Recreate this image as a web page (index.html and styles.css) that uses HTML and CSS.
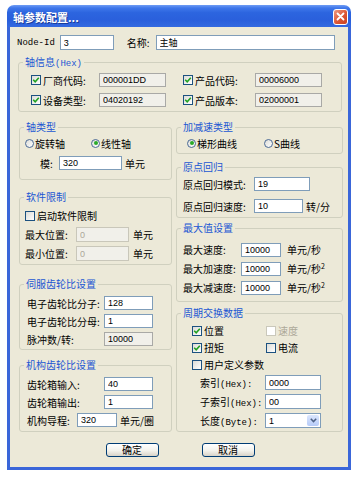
FILE: index.html
```html
<!DOCTYPE html>
<html lang="zh-CN">
<head>
    <meta charset="UTF-8">
    <meta name="viewport" content="width=device-width, initial-scale=1.0">
    <title>轴参数配置</title>
    <link rel="stylesheet" href="styles.css">
</head>
<body>
    <div class="window">
        <div class="titlebar">
            <span class="title">轴参数配置...</span>
            <span class="close">
                <svg width="9" height="9" viewBox="0 0 9 9"><path d="M1.5 1.5 L7.5 7.5 M7.5 1.5 L1.5 7.5" stroke="#fff" stroke-width="1.8" stroke-linecap="round"/></svg>
            </span>
        </div>
        <div class="frame">
            <div class="top-row">
                <span class="mono">Node-Id</span>
                <input class="field node-id" value="3">
                <span class="name-lbl">名称:</span>
                <input class="field name" value="主轴">
            </div>

            <div class="group axis-info">
                <span class="legend">轴信息<span class="mono">(Hex)</span></span>
                <div class="body">
                    <div class="item">
                        <span class="cb"><svg viewBox="0 0 8 8"><path d="M1.2 3.8 L3.2 5.8 L6.8 1.8" fill="none" stroke="#21a121" stroke-width="1.6"/></svg></span>
                        <span class="lbl">厂商代码:</span>
                        <input class="field ro" value="000001DD" readonly>
                    </div>
                    <div class="item">
                        <span class="cb"><svg viewBox="0 0 8 8"><path d="M1.2 3.8 L3.2 5.8 L6.8 1.8" fill="none" stroke="#21a121" stroke-width="1.6"/></svg></span>
                        <span class="lbl">产品代码:</span>
                        <input class="field ro" value="00006000" readonly>
                    </div>
                    <div class="item">
                        <span class="cb"><svg viewBox="0 0 8 8"><path d="M1.2 3.8 L3.2 5.8 L6.8 1.8" fill="none" stroke="#21a121" stroke-width="1.6"/></svg></span>
                        <span class="lbl">设备类型:</span>
                        <input class="field ro" value="04020192" readonly>
                    </div>
                    <div class="item">
                        <span class="cb"><svg viewBox="0 0 8 8"><path d="M1.2 3.8 L3.2 5.8 L6.8 1.8" fill="none" stroke="#21a121" stroke-width="1.6"/></svg></span>
                        <span class="lbl">产品版本:</span>
                        <input class="field ro" value="02000001" readonly>
                    </div>
                </div>
            </div>

            <div class="columns">
                <div class="col">
                    <div class="group axis-type">
                        <span class="legend">轴类型</span>
                        <div class="body">
                            <div class="row">
                                <span class="opt first"><span class="radio"></span>旋转轴</span>
                                <span class="opt"><span class="radio on"></span>线性轴</span>
                            </div>
                            <div class="row">
                                <span class="lbl mod-lbl">模:</span>
                                <input class="field mod" value="320">
                                <span class="unit">单元</span>
                            </div>
                        </div>
                    </div>

                    <div class="group soft-limit">
                        <span class="legend">软件限制</span>
                        <div class="body">
                            <div class="row">
                                <span class="cb"></span>
                                <span class="cb-text">启动软件限制</span>
                            </div>
                            <div class="row">
                                <span class="lbl">最大位置:</span>
                                <input class="field dis" value="0" disabled>
                                <span class="unit">单元</span>
                            </div>
                            <div class="row">
                                <span class="lbl">最小位置:</span>
                                <input class="field dis" value="0" disabled>
                                <span class="unit">单元</span>
                            </div>
                        </div>
                    </div>

                    <div class="group gear">
                        <span class="legend">伺服齿轮比设置</span>
                        <div class="body">
                            <div class="row">
                                <span class="lbl">电子齿轮比分子:</span>
                                <input class="field" value="128">
                            </div>
                            <div class="row">
                                <span class="lbl">电子齿轮比分母:</span>
                                <input class="field" value="1">
                            </div>
                            <div class="row">
                                <span class="lbl">脉冲数/转:</span>
                                <input class="field ro" value="10000" readonly>
                            </div>
                        </div>
                    </div>

                    <div class="group mech">
                        <span class="legend">机构齿轮比设置</span>
                        <div class="body">
                            <div class="row">
                                <span class="lbl">齿轮箱输入:</span>
                                <input class="field" value="40">
                            </div>
                            <div class="row">
                                <span class="lbl">齿轮箱输出:</span>
                                <input class="field" value="1">
                            </div>
                            <div class="row">
                                <span class="lbl lead-lbl">机构导程:</span>
                                <input class="field lead" value="320">
                                <span class="unit">单元/圈</span>
                            </div>
                        </div>
                    </div>
                </div>

                <div class="col">
                    <div class="group accel">
                        <span class="legend">加减速类型</span>
                        <div class="body">
                            <div class="row">
                                <span class="opt first"><span class="radio on"></span>梯形曲线</span>
                                <span class="opt"><span class="radio"></span>S曲线</span>
                            </div>
                        </div>
                    </div>

                    <div class="group origin">
                        <span class="legend">原点回归</span>
                        <div class="body">
                            <div class="row">
                                <span class="lbl">原点回归模式:</span>
                                <input class="field mode" value="19">
                            </div>
                            <div class="row">
                                <span class="lbl">原点回归速度:</span>
                                <input class="field speed" value="10">
                                <span class="unit">转/分</span>
                            </div>
                        </div>
                    </div>

                    <div class="group maxval">
                        <span class="legend">最大值设置</span>
                        <div class="body">
                            <div class="row">
                                <span class="lbl">最大速度:</span>
                                <input class="field" value="10000">
                                <span class="unit">单元/秒</span>
                            </div>
                            <div class="row">
                                <span class="lbl">最大加速度:</span>
                                <input class="field" value="10000">
                                <span class="unit">单元/秒<sup>2</sup></span>
                            </div>
                            <div class="row">
                                <span class="lbl">最大减速度:</span>
                                <input class="field" value="10000">
                                <span class="unit">单元/秒<sup>2</sup></span>
                            </div>
                        </div>
                    </div>

                    <div class="group cyclic">
                        <span class="legend">周期交换数据</span>
                        <div class="body">
                            <div class="row check-row">
                                <span class="opt first">
                                    <span class="cb"><svg viewBox="0 0 8 8"><path d="M1.2 3.8 L3.2 5.8 L6.8 1.8" fill="none" stroke="#21a121" stroke-width="1.6"/></svg></span>位置
                                </span>
                                <span class="opt off"><span class="cb disabled"></span>速度</span>
                            </div>
                            <div class="row check-row">
                                <span class="opt first">
                                    <span class="cb"><svg viewBox="0 0 8 8"><path d="M1.2 3.8 L3.2 5.8 L6.8 1.8" fill="none" stroke="#21a121" stroke-width="1.6"/></svg></span>扭矩
                                </span>
                                <span class="opt"><span class="cb"></span>电流</span>
                            </div>
                            <div class="row check-row">
                                <span class="opt"><span class="cb"></span>用户定义参数</span>
                            </div>
                            <div class="row param-row">
                                <span class="lbl">索引<span class="mono">(Hex):</span></span>
                                <input class="field" value="0000">
                            </div>
                            <div class="row param-row">
                                <span class="lbl">子索引<span class="mono">(Hex):</span></span>
                                <input class="field" value="00">
                            </div>
                            <div class="row param-row">
                                <span class="lbl">长度<span class="mono">(Byte):</span></span>
                                <div class="combo">
                                    <span class="combo-text">1</span>
                                    <span class="combo-btn">
                                        <svg width="7" height="5" viewBox="0 0 7 5"><path d="M0.8 0.8 L3.5 3.6 L6.2 0.8" fill="none" stroke="#4d6185" stroke-width="1.5"/></svg>
                                    </span>
                                </div>
                            </div>
                        </div>
                    </div>
                </div>
            </div>

            <div class="buttons">
                <button class="btn">确定</button>
                <button class="btn">取消</button>
            </div>
        </div>
    </div>
</body>
</html>
```

FILE: styles.css
```css
body {
    margin: 0;
    background: #fff;
    font-family: "Noto Sans CJK SC", sans-serif;
    font-size: 10px;
    color: #000;
}
.window {
    width: 344px;
    margin: 5px 0 0 7px;
}
.titlebar {
    height: 22px;
    box-sizing: border-box;
    display: flex;
    align-items: center;
    justify-content: space-between;
    padding: 1px 3px 0 6px;
    border-radius: 7px 7px 0 0;
    background: linear-gradient(#6f9cf4 0, #3f77ea 3px, #2c65df 35%, #2a5fdc 70%, #3369e0 100%);
}
.title {
    color: #fff;
    font-size: 11px;
    font-weight: bold;
    text-shadow: 1px 1px 0 #1a3c9a;
}
.close {
    width: 15px;
    height: 16px;
    box-sizing: border-box;
    display: flex;
    align-items: center;
    justify-content: center;
    border: 1px solid #fff;
    border-radius: 3px;
    background: linear-gradient(135deg, #ee9a82, #dc5634 55%, #c8401f);
}
.frame {
    height: 443px;
    box-sizing: border-box;
    border: 3px solid #3a66d9;
    border-top: 0;
    background: #ece9d8;
    padding: 8px 5px 0 7px;
}
.mono {
    font-family: "Liberation Mono", monospace;
    font-size: 9px;
}

/* inputs */
.field {
    box-sizing: border-box;
    height: 14px;
    margin: 0;
    padding: 0 3px;
    border: 1px solid #7f9db9;
    background: #fff;
    color: #000;
    font-family: "Liberation Sans", "Noto Sans CJK SC", sans-serif;
    font-size: 9px;
    outline: none;
}
.field.ro {
    background: #f1f0ea;
    border-color: #a9a9a6;
}
.field.dis {
    background: #f1f0ea;
    border-color: #c9c7ba;
    color: #aca899;
}

/* top line */
.top-row {
    display: flex;
    align-items: center;
    height: 15px;
}
.top-row .field {
    height: 15px;
}
.node-id {
    width: 54px;
    margin-left: 5px;
}
.name-lbl {
    margin-left: 13px;
}
.name {
    width: 179px;
    margin-left: 6px;
}

/* group boxes */
.group {
    display: flex;
    flex-direction: column;
    border: 1px solid #d0d0bf;
    border-radius: 3px;
}
.legend {
    align-self: flex-start;
    height: 12px;
    line-height: 12px;
    margin: -7px 0 0 4px;
    padding: 0 2px;
    background: #ece9d8;
    color: #2256d3;
}
.row {
    display: flex;
    align-items: center;
    height: 20px;
}
.unit {
    margin-left: 3px;
    white-space: nowrap;
}
.unit sup {
    font-size: 7px;
    line-height: 0;
    vertical-align: 4px;
}

/* checkbox + radio */
.cb {
    flex: none;
    width: 10px;
    height: 10px;
    box-sizing: border-box;
    display: inline-flex;
    align-items: center;
    justify-content: center;
    border: 1px solid #1c5180;
    background: linear-gradient(135deg, #dcdcd7, #fff);
    margin-right: 2px;
}
.cb svg {
    width: 8px;
    height: 8px;
}
.cb.disabled {
    border-color: #cac8bb;
    background: #fff;
}
.radio {
    flex: none;
    width: 9px;
    height: 9px;
    box-sizing: border-box;
    display: inline-flex;
    align-items: center;
    justify-content: center;
    border: 1px solid #4b6a96;
    border-radius: 50%;
    background: linear-gradient(135deg, #dcdcd7, #fff);
    margin-right: 1px;
}
.radio.on::after {
    content: "";
    width: 4px;
    height: 4px;
    border-radius: 50%;
    background: #2aaa2a;
}
.opt {
    display: flex;
    align-items: center;
}
.opt.off {
    color: #aca899;
}

/* axis info */
.axis-info {
    margin: 12px 1px 0;
}
.axis-info .body {
    display: grid;
    grid-template-columns: 135px 139px;
    column-gap: 17px;
    padding: 2px 0 1px 12px;
}
.axis-info .item {
    display: flex;
    align-items: center;
    height: 20px;
}
.axis-info .lbl {
    flex: 1;
}
.axis-info .field {
    width: 67px;
}

/* columns */
.columns {
    display: grid;
    grid-template-columns: 153px 167px;
    column-gap: 4px;
    margin: 15px 0 0 2px;
    align-items: start;
}
.col {
    display: flex;
    flex-direction: column;
}

.axis-type .body {
    padding: 0 0 6px 5px;
}
.axis-type .opt.first {
    width: 66px;
}
.mod-lbl {
    width: 19px;
    margin-left: 15px;
}
.mod {
    width: 63px;
}

.soft-limit {
    margin-top: 17px;
}
.soft-limit .body {
    padding: 3px 0 1px 5px;
}
.soft-limit .row {
    height: 19px;
}
.soft-limit .lbl {
    width: 51px;
}
.soft-limit .field {
    width: 53px;
    height: 15px;
}
.soft-limit .unit {
    margin-left: 4px;
}

.gear {
    margin-top: 19px;
}
.mech {
    margin-top: 15px;
}
.gear .body,
.mech .body {
    padding: 4px 0 1px 7px;
}
.mech .body {
    padding-bottom: 2px;
}
.gear .row,
.mech .row {
    height: 18px;
}
.gear .lbl,
.mech .lbl {
    width: 77px;
}
.gear .field,
.mech .field {
    width: 49px;
}
.mech .lead-lbl {
    width: 50px;
}
.mech .lead {
    width: 40px;
}

.accel .body {
    padding-left: 10px;
}
.accel .opt.first {
    width: 77px;
}

.origin {
    margin-top: 13px;
}
.origin .body {
    padding-left: 6px;
}
.origin .row {
    height: 22px;
}
.origin .lbl {
    width: 71px;
}
.origin .mode {
    width: 56px;
}
.origin .speed {
    width: 49px;
}

.maxval {
    margin-top: 10px;
}
.maxval .body {
    padding: 6px 0 4px 6px;
}
.maxval .row {
    height: 19px;
}
.maxval .lbl {
    width: 58px;
}
.maxval .field {
    width: 40px;
}
.maxval .unit {
    margin-left: 6px;
}

.cyclic {
    margin-top: 11px;
}
.cyclic .body {
    padding: 3px 0 1px 15px;
}
.cyclic .check-row {
    height: 17px;
}
.cyclic .opt.first {
    width: 74px;
}
.cyclic .param-row {
    height: 19px;
    padding-left: 8px;
}
.cyclic .lbl {
    width: 65px;
    white-space: nowrap;
}
.cyclic .field {
    width: 56px;
    height: 15px;
}
.combo {
    box-sizing: border-box;
    width: 56px;
    height: 15px;
    display: flex;
    align-items: center;
    border: 1px solid #7f9db9;
    background: #fff;
    padding: 0 1px 0 3px;
    font-family: "Liberation Sans", sans-serif;
    font-size: 9px;
}
.combo-text {
    flex: 1;
}
.combo-btn {
    width: 12px;
    height: 11px;
    display: flex;
    align-items: center;
    justify-content: center;
    border-radius: 2px;
    background: linear-gradient(#dbe6fd, #b6cbf8);
}

/* buttons */
.buttons {
    display: flex;
    justify-content: center;
    gap: 43px;
    margin-top: 11px;
}
.btn {
    box-sizing: border-box;
    width: 53px;
    height: 14px;
    margin: 0;
    padding: 0;
    border: 1px solid #003c74;
    border-radius: 3px;
    background: linear-gradient(#fff, #f3f2ec 55%, #d8d3c8);
    font-family: "Noto Sans CJK SC", sans-serif;
    font-size: 10px;
    line-height: 12px;
    color: #000;
}
```
